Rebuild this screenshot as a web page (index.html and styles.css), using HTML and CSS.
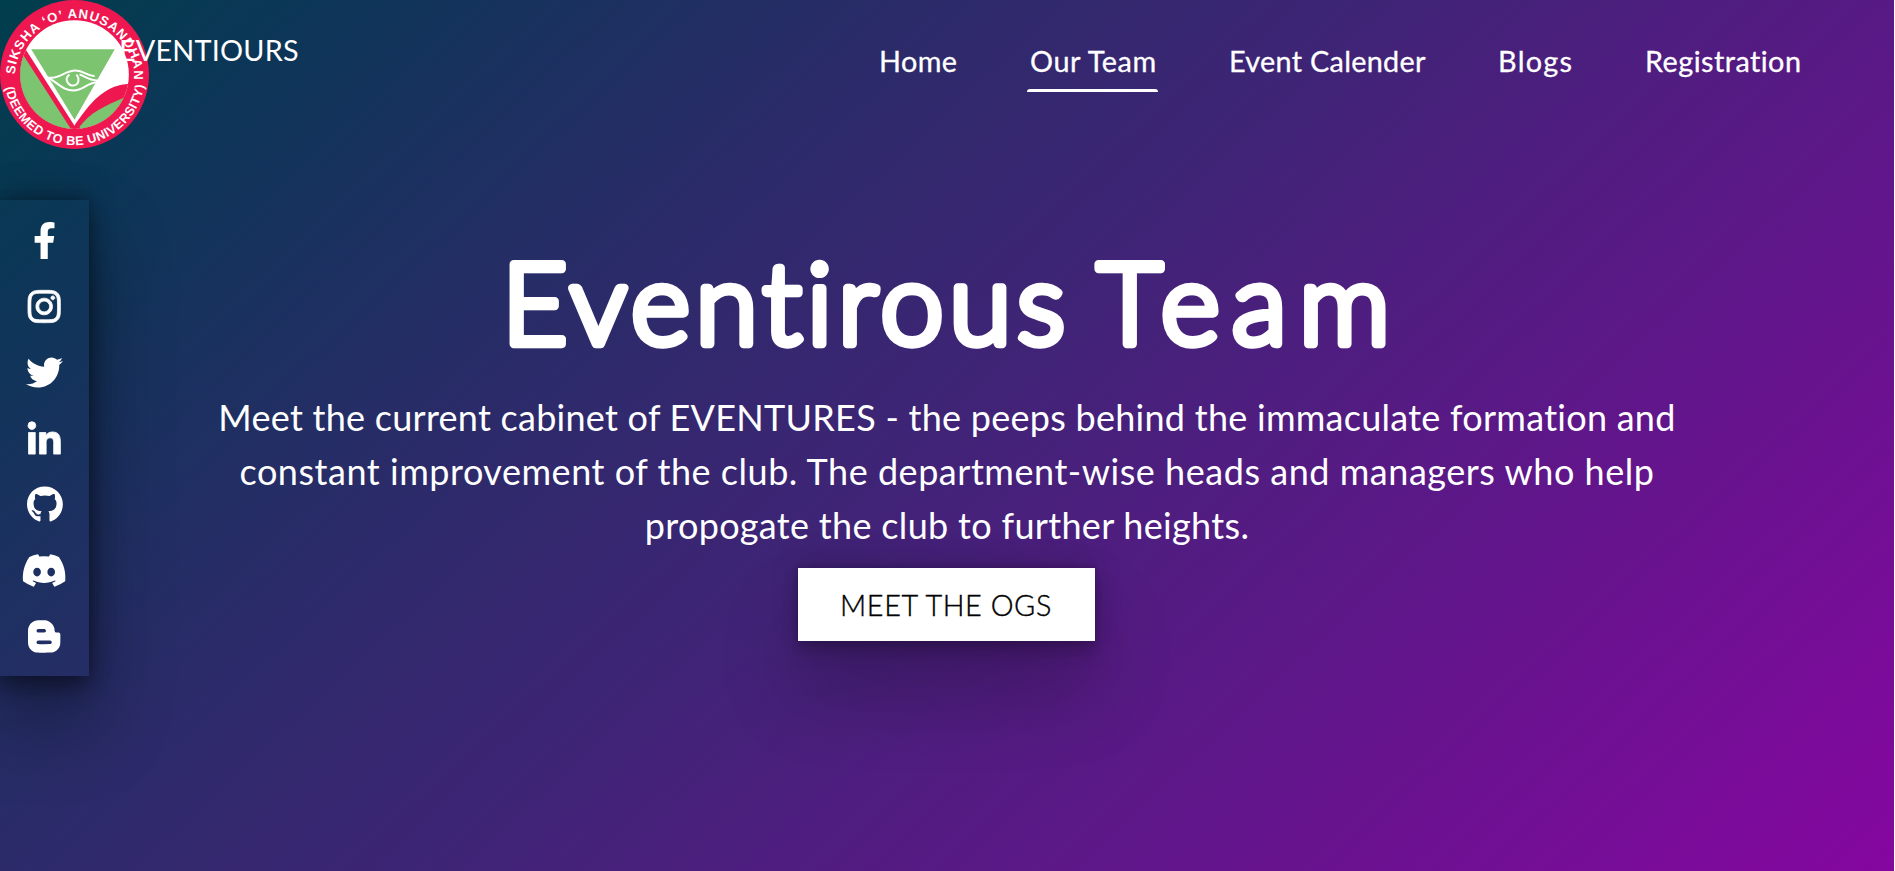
FILE: index.html
```html
<!DOCTYPE html>
<html lang="en">
<head>
<meta charset="utf-8">
<title>Eventirous Team</title>
<link rel="stylesheet" href="styles.css">
</head>
<body>
<div class="page">
  <header class="header">
    <a class="brand" href="#">
      <svg class="logo" viewBox="0 0 148 148" aria-hidden="true">
        <defs>
          <clipPath id="disc"><circle cx="74" cy="74" r="54"/></clipPath>
          <path id="arc-top" d="M14.700 74A59.500 59.500 0 0 1 133.500 74L133.500 90"/>
          <path id="arc-bottom" d="M5.200 87A70 70 0 0 0 143.300 84L145 74"/>
        </defs>
        <circle cx="74" cy="74" r="74" fill="#ef1750"/>
        <g clip-path="url(#disc)">
          <rect width="148" height="148" fill="#fff"/>
          <path d="M130 83C108 84 94 95 75 123L71 130H130Z" fill="#ef1750"/>
          <path d="M26 50L15 40V135H80L74 125Z" fill="#ef1750"/>
          <path d="M15 42L71 129H10Z" fill="#7dc470"/>
          <path d="M124 96.500C104 105 89 112 79 126L81 132H130Z" fill="#7dc470"/>
        </g>
        <path d="M31 49H114L74 119Z" fill="#7dc470"/>
        <g fill="none" stroke="#fff" stroke-width="2">
          <path d="M48 77C59 79 64 70 75 70C84 70 86 76 94 75.500"/>
          <path d="M48 77C58 83 63 90 73 90C83 90 86 82 98 81.500"/>
          <path d="M79 74C83 75 88 80 97 80M69 74C63 79 68 85 73 85C79 84 79 78 76 74"/>
        </g>
        <g class="seal">
          <text><textPath href="#arc-top" textLength="185">SIKSHA ‘O’ ANUSANDHAN</textPath></text>
          <text class="seal-lower"><textPath href="#arc-bottom" textLength="196">(DEEMED TO BE UNIVERSITY)</textPath></text>
        </g>
      </svg>
      <span class="brand-name">EVENTIOURS</span>
    </a>
    <nav class="nav">
      <a class="n-home" href="#">Home</a>
      <a class="n-team active" href="#">Our Team</a>
      <a class="n-cal" href="#">Event Calender</a>
      <a class="n-blogs" href="#">Blogs</a>
      <a class="n-reg" href="#">Registration</a>
    </nav>
  </header>

  <aside class="social">
    <a href="#"><svg viewBox="0 0 320 512"><path d="M279.14 288l14.22-92.66h-88.91v-60.13c0-25.35 12.42-50.06 52.24-50.06h40.42V6.26S260.43 0 225.36 0c-73.22 0-121.08 44.38-121.08 124.72v70.62H22.89V288h81.39v224h100.17V288z"/></svg></a>
    <a href="#"><svg viewBox="0 0 448 512"><path class="bold" d="M224.100 141c-63.600 0-114.900 51.300-114.900 114.900s51.300 114.900 114.900 114.900S339 319.500 339 255.900 287.700 141 224.100 141zm0 189.600c-41.100 0-74.700-33.500-74.700-74.700s33.500-74.700 74.700-74.700 74.700 33.500 74.700 74.700-33.600 74.700-74.700 74.700zm146.400-194.300c0 14.900-12 26.800-26.800 26.800-14.900 0-26.800-12-26.800-26.800s12-26.800 26.800-26.800 26.800 12 26.800 26.800zm76.100 27.200c-1.700-35.900-9.900-67.700-36.200-93.900-26.200-26.200-58-34.400-93.900-36.200-37-2.100-147.900-2.100-184.900 0-35.800 1.700-67.600 9.900-93.900 36.100s-34.400 58-36.200 93.900c-2.100 37-2.100 147.900 0 184.900 1.700 35.900 9.900 67.700 36.200 93.900s58 34.400 93.900 36.200c37 2.100 147.900 2.100 184.900 0 35.900-1.700 67.700-9.900 93.900-36.200 26.200-26.200 34.400-58 36.200-93.900 2.100-37 2.100-147.800 0-184.800zM398.800 388c-7.800 19.600-22.900 34.700-42.600 42.600-29.500 11.700-99.500 9-132.100 9s-102.700 2.600-132.100-9c-19.600-7.800-34.700-22.900-42.600-42.600-11.700-29.500-9-99.500-9-132.100s-2.600-102.700 9-132.100c7.800-19.600 22.900-34.700 42.600-42.600 29.500-11.700 99.500-9 132.100-9s102.700-2.600 132.100 9c19.600 7.800 34.700 22.900 42.600 42.600 11.700 29.500 9 99.500 9 132.100s2.700 102.700-9 132.100z"/></svg></a>
    <a href="#"><svg viewBox="0 0 512 512"><path d="M459.370 151.716c.325 4.548.325 9.097.325 13.645 0 138.720-105.583 298.558-298.558 298.558-59.452 0-114.680-17.219-161.137-47.106 8.447.974 16.568 1.299 25.340 1.299 49.055 0 94.213-16.568 130.274-44.832-46.132-.975-84.792-31.188-98.112-72.772 6.498.974 12.995 1.624 19.818 1.624 9.421 0 18.843-1.300 27.614-3.573-48.081-9.747-84.143-51.980-84.143-102.985v-1.299c13.969 7.797 30.214 12.670 47.431 13.319-28.264-18.843-46.781-51.005-46.781-87.391 0-19.492 5.197-37.360 14.294-52.954 51.655 63.675 129.300 105.258 216.365 109.807-1.624-7.797-2.599-15.918-2.599-24.040 0-57.828 46.782-104.934 104.934-104.934 30.213 0 57.502 12.670 76.670 33.137 23.715-4.548 46.456-13.320 66.599-25.340-7.798 24.366-24.366 44.833-46.132 57.827 21.117-2.273 41.584-8.122 60.426-16.243-14.292 20.791-32.161 39.308-52.628 54.253z"/></svg></a>
    <a href="#"><svg viewBox="0 0 448 512"><path class="bold" transform="translate(0 24)" d="M100.280 448H7.400V148.900h92.880zM53.790 108.100C24.090 108.100 0 83.500 0 53.800a53.790 53.790 0 0 1 107.580 0c0 29.700-24.100 54.300-53.790 54.300zM447.900 448h-92.680V302.400c0-34.700-.7-79.200-48.290-79.200-48.290 0-55.690 37.700-55.690 76.700V448h-92.780V148.900h89.080v40.800h1.300c12.400-23.500 42.690-48.300 87.880-48.300 94 0 111.280 61.900 111.280 142.300V448z"/></svg></a>
    <a href="#"><svg viewBox="0 0 496 512"><path d="M165.900 397.400c0 2-2.300 3.600-5.200 3.600-3.300.3-5.600-1.300-5.600-3.600 0-2 2.300-3.600 5.200-3.600 3-.3 5.600 1.300 5.600 3.600zm-31.100-4.500c-.7 2 1.300 4.300 4.300 4.900 2.600 1 5.600 0 6.200-2s-1.300-4.300-4.300-5.200c-2.600-.7-5.500.3-6.200 2.300zm44.200-1.700c-2.900.7-4.900 2.600-4.600 4.900.3 2 2.900 3.300 5.900 2.600 2.900-.7 4.900-2.600 4.600-4.600-.3-1.900-3-3.200-5.900-2.900zM244.800 8C106.100 8 0 113.300 0 252c0 110.900 69.800 205.800 169.500 239.200 12.800 2.300 17.300-5.600 17.300-12.100 0-6.200-.3-40.400-.3-61.400 0 0-70 15-84.700-29.800 0 0-11.400-29.100-27.800-36.600 0 0-22.900-15.700 1.600-15.400 0 0 24.900 2 38.600 25.800 21.900 38.600 58.600 27.500 72.900 20.900 2.300-16 8.800-27.100 16-33.700-55.900-6.200-112.300-14.300-112.300-110.500 0-27.500 7.600-41.300 23.600-58.900-2.600-6.500-11.100-33.300 2.600-67.900 20.900-6.500 69 27 69 27 20-5.600 41.500-8.500 62.800-8.500s42.800 2.900 62.800 8.500c0 0 48.100-33.600 69-27 13.700 34.700 5.200 61.400 2.600 67.900 16 17.700 25.800 31.500 25.800 58.900 0 96.500-58.900 104.200-114.800 110.500 9.200 7.900 17 22.900 17 46.400 0 33.700-.3 75.400-.3 83.600 0 6.500 4.600 14.400 17.300 12.100C428.200 457.800 496 362.900 496 252 496 113.300 383.500 8 244.800 8z"/></svg></a>
    <a href="#"><svg viewBox="0 0 640 512"><path d="M524.531,69.836a1.5,1.5,0,0,0-.764-.7A485.065,485.065,0,0,0,404.081,32.030a1.816,1.816,0,0,0-1.923.91,337.461,337.461,0,0,0-14.900,30.600,447.848,447.848,0,0,0-134.426,0,309.541,309.541,0,0,0-15.135-30.600,1.890,1.890,0,0,0-1.924-.91A483.689,483.689,0,0,0,116.085,69.137a1.712,1.712,0,0,0-.788.676C39.068,183.651,18.186,294.690,28.430,404.354a2.016,2.016,0,0,0,.765,1.375A487.666,487.666,0,0,0,176.020,479.918a1.900,1.900,0,0,0,2.063-.676A348.200,348.200,0,0,0,208.120,430.400a1.860,1.860,0,0,0-1.019-2.588,321.173,321.173,0,0,1-45.868-21.853,1.885,1.885,0,0,1-.185-3.126c3.082-2.309,6.166-4.711,9.109-7.137a1.819,1.819,0,0,1,1.900-.256c96.229,43.917,200.410,43.917,295.500,0a1.812,1.812,0,0,1,1.924.233c2.944,2.426,6.027,4.851,9.132,7.160a1.884,1.884,0,0,1-.162,3.126,301.407,301.407,0,0,1-45.890,21.830,1.875,1.875,0,0,0-1,2.611,391.055,391.055,0,0,0,30.014,48.815,1.864,1.864,0,0,0,2.063.7A486.048,486.048,0,0,0,610.700,405.729a1.882,1.882,0,0,0,.765-1.352C623.729,277.594,590.933,167.465,524.531,69.836ZM222.491,337.580c-28.972,0-52.844-26.587-52.844-59.239S193.056,219.100,222.491,219.100c29.665,0,53.306,26.820,52.843,59.239C275.334,310.993,251.924,337.580,222.491,337.580Zm195.380,0c-28.971,0-52.843-26.587-52.843-59.239S388.437,219.100,417.871,219.100c29.667,0,53.307,26.820,52.844,59.239C470.715,310.993,447.538,337.580,417.871,337.580Z"/></svg></a>
    <a href="#"><svg viewBox="0 0 448 512"><path d="M446.600 222.700c-1.800-8-6.800-15.400-12.500-18.500-1.800-1-13-2.200-25-2.700-20.100-.9-22.300-1.300-28.700-5-10.100-5.900-12.800-12.300-12.900-29.500-.1-33-13.800-63.700-40.900-91.300-19.300-19.700-40.900-33-65.500-40.500-5.900-1.800-19.100-2.400-63.300-2.900-69.400-.8-84.800.6-108.400 10C45.900 59.500 14.700 96.100 3.300 142.900 1.200 151.700.7 165.800.2 246.800c-.6 101.500.1 116.400 6.400 136.500 15.600 49.600 59.900 86.300 104.400 94.300 14.800 2.700 197.300 3.300 216 .8 32.500-4.400 58-17.500 81.900-41.900 17.300-17.700 28.100-36.800 35.200-62.100 4.900-17.600 4.500-142.800 2.500-151.700zm-322.100-63.600c7.800-7.900 10-8.200 58.800-8.200 43.900 0 45.400.1 51.800 3.400 9.300 4.700 13.400 11.300 13.400 21.900 0 9.500-3.800 16.200-12.300 21.600-4.600 2.900-7.300 3.100-50.300 3.300-26.500.2-47.700-.4-50.800-1.200-16.600-4.700-22.800-28.500-10.600-40.800zm191.800 199.800l-14.900 2.400-77.500.9c-68.100.8-87.300-.4-90.900-2-7.100-3.100-13.800-11.700-14.900-19.400-1.100-7.300 2.600-17.300 8.200-22.400 7.100-6.400 10.200-6.600 97.300-6.700 89.600-.1 89.100-.1 97.600 7.800 12.100 11.300 9.500 31.200-4.900 39.400z"/></svg></a>
  </aside>

  <main class="hero">
    <h1 class="title">
      <svg viewBox="0 0 900 160"><text y="119"><tspan x="5" textLength="563">Eventirous</tspan> <tspan x="600" textLength="293">Team</tspan></text></svg>
    </h1>
    <p class="lead">
      <span class="l1">Meet the current cabinet of EVENTURES - the peeps behind the immaculate formation and</span>
      <span class="l2">constant improvement of the club. The department-wise heads and managers who help</span>
      <span class="l3">propogate the club to further heights.</span>
    </p>
    <a class="cta" href="#"><span>MEET THE OGS</span></a>
  </main>
</div>
</body>
</html>
```
FILE: styles.css
```css
* { box-sizing: border-box; }
html { background: #fff; }
body {
  margin: 0;
  color: #fff;
  font-family: Lato, "Open Sans", sans-serif;
  font-variant-ligatures: none;
  overflow: hidden;
}
a { color: inherit; text-decoration: none; }

.page {
  position: relative;
  width: 1894px;
  height: 871px;
  overflow: hidden;
  background: linear-gradient(137deg, #003e4c 0%, #0c3657 11%, #2b2b69 32.5%, #3f2476 49%, #8507a0 100%);
}

/* Header */
.header {
  display: flex;
  justify-content: space-between;
  height: 148px;
}
.brand { display: flex; }
.logo { width: 149px; height: 149px; flex: none; }
.seal {
  fill: #fff;
  font: bold 13px "Liberation Sans", sans-serif;
}
.seal-lower { font-size: 12.6px; }
.brand-name {
  position: relative;
  margin-left: -30px;
  padding-top: 32px;
  font-size: 28.8px;
  line-height: 36px;
  letter-spacing: 0.2px;
}
.nav {
  display: flex;
  gap: 72px;
  padding: 43px 92px 0 0;
  font-size: 28.8px;
  line-height: 36px;
  white-space: nowrap;
  -webkit-text-stroke: 0.3px #fff;
}
.nav a { height: 49px; }
.n-home { width: 79px; letter-spacing: 0.4px; }
.n-team { width: 127px; letter-spacing: 0.6px; }
.n-cal { width: 197px; letter-spacing: 0.3px; }
.n-blogs { width: 75px; letter-spacing: 1.3px; }
.n-reg { width: 157px; letter-spacing: 0.45px; }
.nav .active::after {
  content: "";
  display: block;
  height: 3px;
  margin: 10px -1px 0 -3px;
  background: #fff;
  border-radius: 3px 3px 0 0;
}

/* Social rail, pinned over the left edge */
.social {
  position: absolute;
  left: 0;
  top: 200px;
  width: 89px;
  height: 476px;
  padding: 7px 0;
  display: flex;
  flex-direction: column;
  box-shadow: rgba(0, 0, 0, 0.38) 0 45px 80px, rgba(0, 0, 0, 0.2) 0 -10px 30px,
    rgba(0, 0, 0, 0.32) 0 12px 20px, rgba(0, 0, 0, 0.15) 0 0 10px;
}
.social a {
  height: 66.1px;
  display: flex;
  align-items: center;
  justify-content: center;
}
.social svg { height: 37px; fill: #fff; overflow: visible; }
.social .bold { stroke: #fff; stroke-width: 11px; }

/* Hero */
.hero {
  display: flex;
  flex-direction: column;
  align-items: center;
  padding-top: 77px;
}
.title {
  margin: 0;
  height: 160px;
}
.title svg { display: block; width: 900px; height: 160px; overflow: visible; }
.title text {
  font: 300 113px Lato, sans-serif;
  font-variant-ligatures: none;
  fill: #fff;
  stroke: #fff;
  stroke-width: 8.4px;
  stroke-linejoin: round;
}
.lead {
  margin: 5px 0 0;
  display: flex;
  flex-direction: column;
  align-items: center;
  font-size: 36px;
  line-height: 54px;
  white-space: nowrap;
}
.l1 { letter-spacing: 0.26px; }
.l2 { letter-spacing: 0.53px; }
.l3 { letter-spacing: 0.32px; }
.cta {
  width: 297px;
  height: 73px;
  margin: 16px 2px 0 0;
  display: flex;
  align-items: center;
  justify-content: center;
  background: #fff;
  color: #000;
  font-size: 28.8px;
  font-weight: 300;
  letter-spacing: 0.6px;
  -webkit-text-stroke: 0.4px #000;
  box-shadow: rgba(0, 0, 0, 0.24) 0 50px 80px, rgba(0, 0, 0, 0.12) 0 -10px 30px,
    rgba(0, 0, 0, 0.1) 0 4px 6px, rgba(0, 0, 0, 0.17) 0 12px 16px, rgba(0, 0, 0, 0.09) 0 -3px 5px;
}
```
